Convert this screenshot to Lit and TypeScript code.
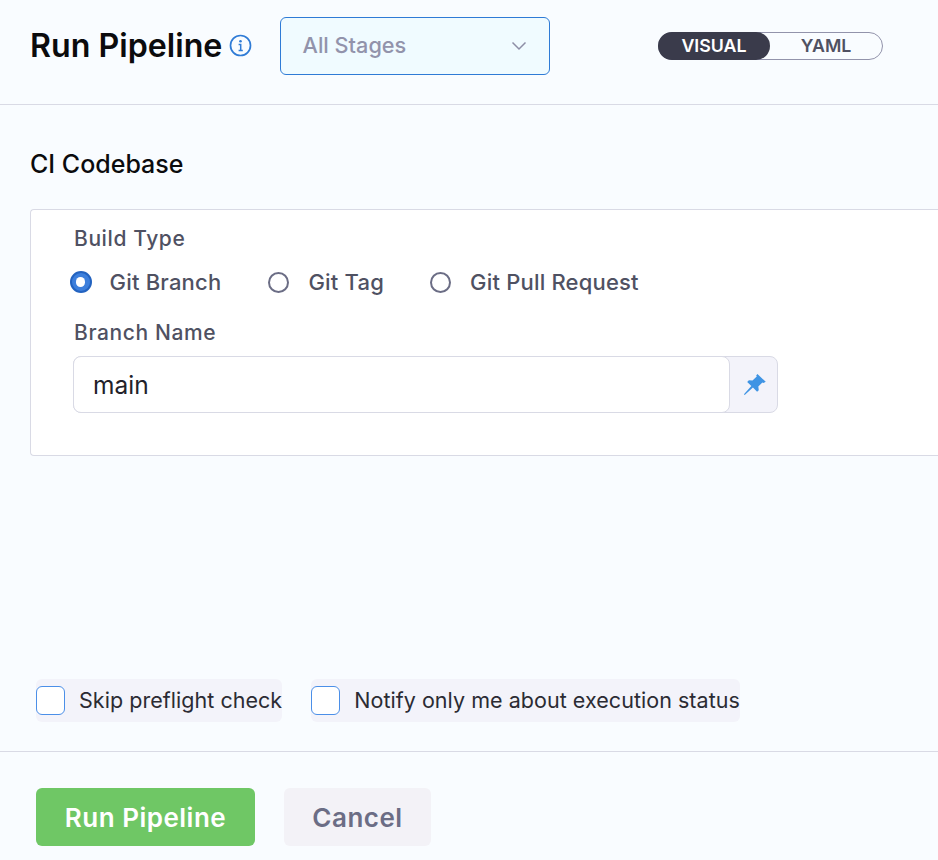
import { LitElement, html, css } from "lit";
import { customElement } from "lit/decorators.js";

@customElement("app-root")
export class AppRoot extends LitElement {
  static styles = css`
    :host { display: block; width: 938px; height: 860px; overflow: hidden; background: #f9fcff; font-family: Inter, "Liberation Sans", sans-serif; color: #4f5162; }
    * { box-sizing: border-box; }
    .page { display: flex; flex-direction: column; height: 860px; }
    .header { height: 105px; flex: none; display: flex; align-items: flex-start; padding: 17px 0 0 30px; border-bottom: 1px solid #d9dae5; }
    .title { font-size: 32.2px; font-weight: 600; color: #0b0b0d; line-height: 58px; width: 192px; white-space: nowrap; }
    .info { margin: 17px 0 0 7px; width: 23px; height: 23px; flex: none; display: block; }
    .select { margin-left: 28px; width: 270px; height: 58px; border: 1px solid #2f7bd6; border-radius: 6px; background: #f0fbff; display: flex; align-items: center; justify-content: space-between; padding: 0 22px 2px 21.5px; font-size: 21.7px; font-weight: 500; color: #9293ab; }
    .select svg { margin-top: 2px; }
    .toggle { margin: 15px 0 0 108px; width: 225px; height: 28px; border: 1px solid #9293ab; border-radius: 14px; display: flex; font-size: 17.8px; font-weight: 600; line-height: 26px; }
    .toggle span { display: block; text-align: center; }
    .on { width: 112px; margin: -1px 0 -1px -1px; height: 28px; line-height: 28px; background: #3a3b4b; color: #fff; border-radius: 14px; }
    .off { flex: 1; color: #4f5162; }
    .body { flex: 1; padding: 0 0 0 30px; }
    h2 { margin: 0; font-size: 25px; font-weight: 500; color: #0b0b0d; line-height: 32px; padding-top: 43px; height: 104px; }
    .card { height: 247px; background: #fff; border: 1px solid #d9dae5; border-right: 0; border-radius: 4px 0 0 4px; padding: 16px 0 0 42px; }
    .label { font-size: 21px; font-weight: 500; line-height: 26px; letter-spacing: 0.6px; padding-left: 1px; }
    .radios { display: flex; align-items: center; margin-top: 13px; height: 34px; font-size: 22px; font-weight: 500; letter-spacing: 0.2px; }
    .radio { display: flex; align-items: center; gap: 19.5px; margin-right: 48.5px; }
    .radio:first-child { margin-right: 49.5px; }
    .dot { width: 21px; height: 21px; border-radius: 50%; border: 2px solid #6b6d85; background: #fff; flex: none; margin-left: -3px; }
    .dot.sel { width: 22px; height: 22px; margin-left: -3.5px; margin-right: -1.5px; border: 2.5px solid #2363c0; background: #3d7fdc; display: flex; align-items: center; justify-content: center; }
    .dot.sel::after { content: ""; width: 9.5px; height: 9.5px; border-radius: 50%; background: #fff; }
    .label.branch { margin-top: 21px; }
    .field { margin-top: 10px; width: 705px; height: 57px; border: 1px solid #d9dae5; border-radius: 8px; background: #f3f3fa; display: flex; }
    .input { width: 657px; margin: -1px 0 -1px -1px; border: 1px solid #d9dae5; border-radius: 8px; background: #fff; font-size: 24.5px; color: #22222a; line-height: 57px; padding-left: 19px; }
    .pin { flex: 1; display: flex; align-items: center; justify-content: center; padding-left: 2px; }
    .checks { display: flex; gap: 29px; margin: 223px 0 0 6px; }
    .check { display: flex; align-items: center; height: 43px; background: #f3f3fa; border-radius: 6px; font-size: 21.5px; letter-spacing: 0.04px; color: #2b2b33; white-space: nowrap; }
    .check span:last-child { margin-top: -2px; }
    .box { width: 29px; height: 29px; margin-right: 14px; border: 1px solid #4b8fe8; border-radius: 6px; background: #fff; flex: none; }
    .footer { height: 109px; flex: none; border-top: 1px solid #d9dae5; display: flex; gap: 29px; padding: 36px 0 0 36px; }
    .btn { height: 58px; border-radius: 6px; display: flex; align-items: center; justify-content: center; font-size: 26px; font-weight: 600; letter-spacing: 0.5px; }
    .primary { width: 219px; background: #6fc765; color: #fff; }
    .secondary { width: 147px; background: #f3f2f7; color: #6b6d85; }
  `;

  render() {
    return html`<div class="page">
      <div class="header">
        <div class="title">Run Pipeline</div>
        <svg class="info" viewBox="0 0 23 23" fill="none"><circle cx="11.5" cy="11.5" r="10" stroke="#2f7bd6" stroke-width="1.7"/><circle cx="11.5" cy="7.2" r="1.3" fill="#2f7bd6"/><path d="M9.6 10.6h2.1v5.6M9.6 16.5h4.2" stroke="#2f7bd6" stroke-width="1.5"/></svg>
        <div class="select">
          <span>All Stages</span>
          <svg width="16" height="10" viewBox="0 0 16 10" fill="none"><path d="M1.5 1.5 8 8l6.5-6.5" stroke="#8d8ea6" stroke-width="1.5"/></svg>
        </div>
        <div class="toggle"><span class="on">VISUAL</span><span class="off">YAML</span></div>
      </div>
      <div class="body">
        <h2>CI Codebase</h2>
        <div class="card">
          <div class="label">Build Type</div>
          <div class="radios">
            <label class="radio"><span class="dot sel"></span>Git Branch</label>
            <label class="radio"><span class="dot"></span>Git Tag</label>
            <label class="radio"><span class="dot"></span>Git Pull Request</label>
          </div>
          <div class="label branch">Branch Name</div>
          <div class="field">
            <div class="input">main</div>
            <div class="pin"><svg width="27" height="27" viewBox="0 0 24 24"><path d="M14.6 2.6 22 9.6l-2 1.1-1-.5-3.6 3.6.4 3.2-1.5 1.4-3.7-3.7-7.3 6.6-.7-.7 6.6-7.3-3.7-3.6 1.5-1.5 3.2.3L14 4.9l-.5-1z" fill="#3f94e4"/></svg></div>
          </div>
        </div>
        <div class="checks">
          <label class="check"><span class="box"></span><span>Skip preflight check</span></label>
          <label class="check"><span class="box"></span><span>Notify only me about execution status</span></label>
        </div>
      </div>
      <div class="footer">
        <div class="btn primary">Run Pipeline</div>
        <div class="btn secondary">Cancel</div>
      </div>
    </div>`;
  }
}
